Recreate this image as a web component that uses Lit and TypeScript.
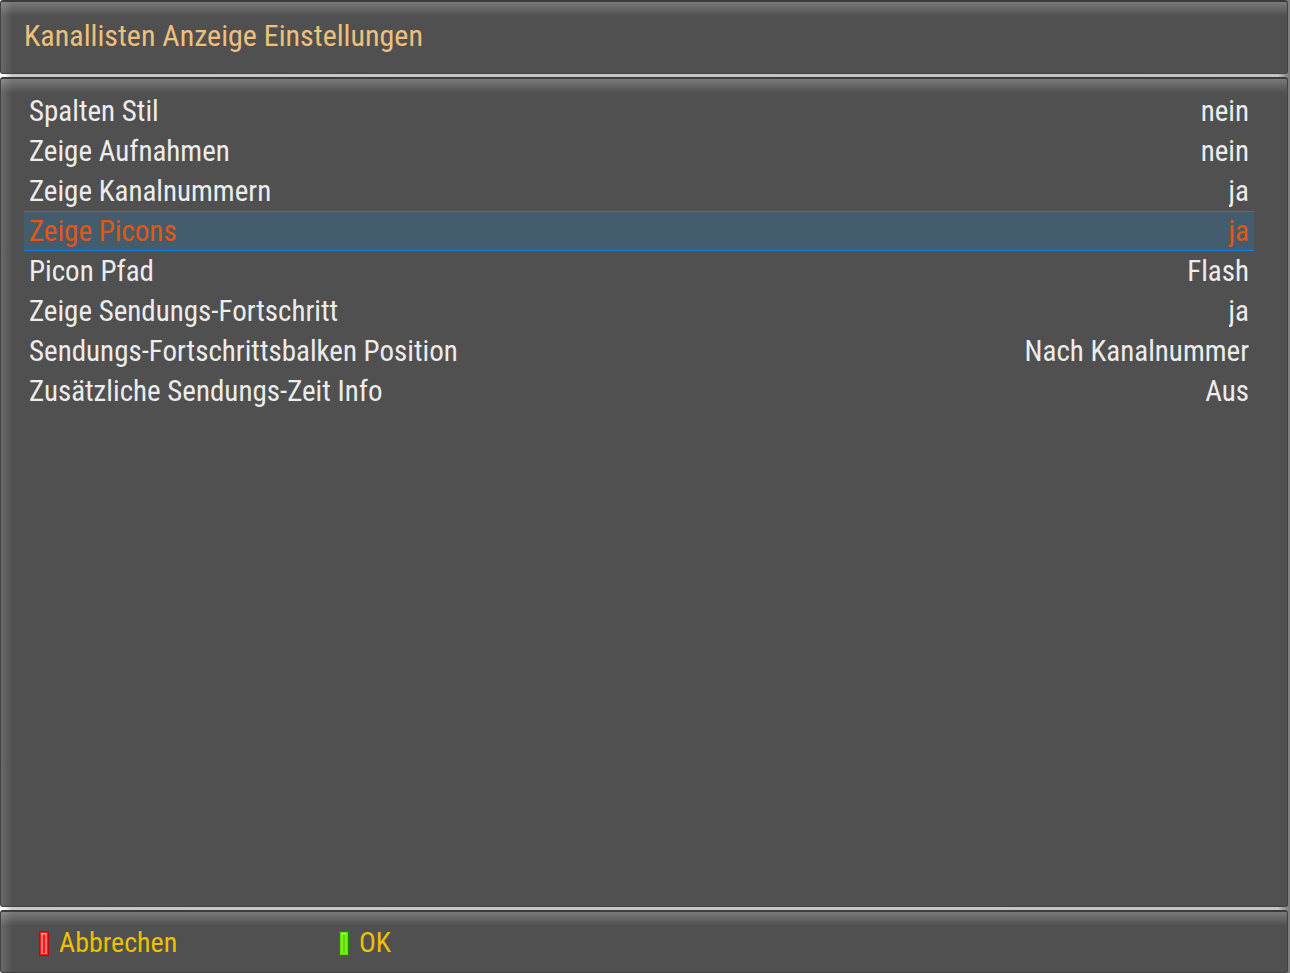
import { LitElement, html, css } from "lit";
import { customElement, property, state } from "lit/decorators.js";
import { classMap } from "lit/directives/class-map.js";

interface Setting {
  id: string;
  label: string;
  value: string;
  options: string[];
}

const YES_NO = ["ja", "nein"];

@customElement("color-key")
class ColorKey extends LitElement {
  @property() color = "red";

  static styles = css`
    :host { display: block; }
    button {
      display: flex;
      align-items: center;
      gap: 10px;
      padding: 0;
      border: 0;
      background: none;
      color: #ecc000;
      font: inherit;
      line-height: 40px;
      cursor: pointer;
    }
    svg { display: block; }
  `;

  render() {
    const red = this.color === "red";
    const edge = red ? "#b80a0a" : "#1e8c00";
    const glow = red ? "#ff7070" : "#7cf01c";
    const core = red ? "#ff1515" : "#5fd800";
    const top = red ? "#ffb8a8" : "#b8ff70";
    return html`<button type="button">
      <svg width="10" height="25" viewBox="0 0 10 25" aria-hidden="true">
        <rect width="10" height="25" fill=${edge} />
        <rect x="1" y="1" width="8" height="23" fill=${core} />
        <rect x="2" y="2" width="6" height="21" fill=${glow} />
        <rect x="4" y="4" width="2" height="18" fill=${core} />
        <rect x="2" y="2" width="5" height="1" fill=${top} />
      </svg>
      <slot></slot>
    </button>`;
  }
}

@customElement("app-root")
class AppRoot extends LitElement {
  @state() private selected = "picons";

  private settings: Setting[] = [
    { id: "columns", label: "Spalten Stil", value: "nein", options: YES_NO },
    { id: "recordings", label: "Zeige Aufnahmen", value: "nein", options: YES_NO },
    { id: "numbers", label: "Zeige Kanalnummern", value: "ja", options: YES_NO },
    { id: "picons", label: "Zeige Picons", value: "ja", options: YES_NO },
    { id: "path", label: "Picon Pfad", value: "Flash", options: ["Flash"] },
    { id: "progress", label: "Zeige Sendungs-Fortschritt", value: "ja", options: YES_NO },
    { id: "position", label: "Sendungs-Fortschrittsbalken Position", value: "Nach Kanalnummer", options: ["Nach Kanalnummer"] },
    { id: "time", label: "Zusätzliche Sendungs-Zeit Info", value: "Aus", options: ["Aus"] },
  ];

  static styles = css`
    :host {
      display: grid;
      grid-template-rows: auto 1fr auto;
      row-gap: 3px;
      box-sizing: border-box;
      min-height: 100vh;
      padding-right: 2px;
      background: linear-gradient(90deg, #fff 4px, #c8c8c8 12px, #c4c4c4 calc(100% - 12px), #808080 calc(100% - 2px));
      color: #ececec;
      font-family: "Roboto Condensed", "Liberation Sans Narrow", Roboto, sans-serif;
      font-size: 29px;
      font-weight: 400;
      line-height: 40px;
    }
    .panel {
      box-sizing: border-box;
      border: 1px solid #424242;
      border-top: 2px solid #3c3c3c;
      border-radius: 3px;
      background:
        linear-gradient(180deg, rgba(255, 255, 255, 0.24), transparent 14px),
        linear-gradient(90deg, rgba(255, 255, 255, 0.14), transparent 12px),
        #505050;
    }
    .title { padding: 14px 23px 17px; }
    h1 {
      margin: 0;
      color: #edc07c;
      font-size: 30px;
      font-weight: inherit;
      line-height: 40px;
    }
    .body { padding: 12px 33px 12px 23px; }
    ul { margin: 0; padding: 0; list-style: none; }
    li {
      display: flex;
      justify-content: space-between;
      box-sizing: border-box;
      height: 40px;
      padding: 0 5px;
    }
    .selected {
      background: #435c6e;
      box-shadow: inset 0 1px #0c7de8, inset 0 -1px #0c7de8;
      color: #e65612;
    }
    select {
      appearance: none;
      padding: 0;
      border: 0;
      outline: 0;
      background: none;
      color: inherit;
      font: inherit;
      field-sizing: content;
      text-align-last: right;
    }
    .keys {
      display: grid;
      grid-template-columns: 300px 300px;
      padding: 11px 38px 9px;
      font-size: 28px;
    }
  `;

  render() {
    return html`
      <header class="panel title"><h1>Kanallisten Anzeige Einstellungen</h1></header>
      <main class="panel body">
        <ul>
          ${this.settings.map(
            (s) => html`<li class=${classMap({ selected: s.id === this.selected })}>
              <label for=${s.id}>${s.label}</label>
              <select id=${s.id} @focus=${() => (this.selected = s.id)}>
                ${s.options.map((o) => html`<option ?selected=${o === s.value}>${o}</option>`)}
              </select>
            </li>`
          )}
        </ul>
      </main>
      <footer class="panel keys">
        <color-key color="red">Abbrechen</color-key>
        <color-key color="green">OK</color-key>
      </footer>
    `;
  }
}
